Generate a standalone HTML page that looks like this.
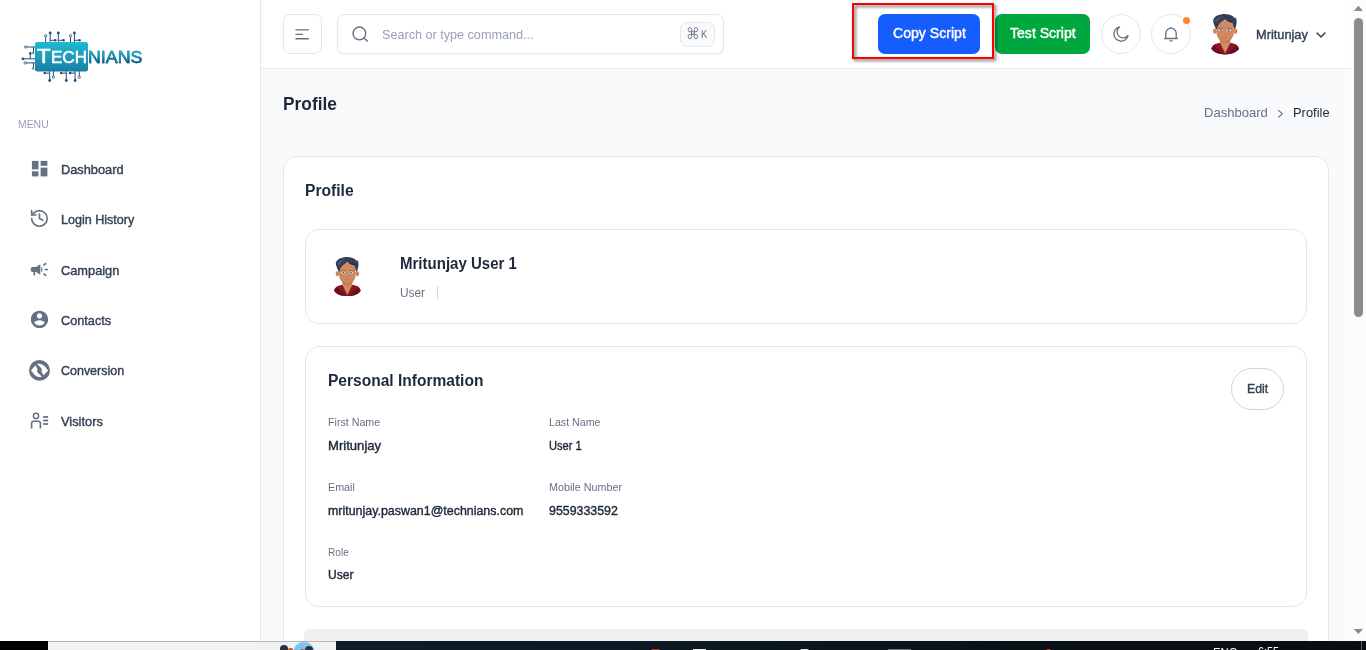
<!DOCTYPE html>
<html lang="en">
<head>
<meta charset="utf-8">
<title>Profile</title>
<style>
*{box-sizing:border-box;margin:0;padding:0}
html,body{width:1366px;height:650px;overflow:hidden;background:#f9fafb;font-family:"Liberation Sans",sans-serif;color:#1d2939}
.abs{position:absolute}
.t{position:absolute;white-space:nowrap;line-height:1;transform-origin:0 0}
.bx{position:absolute;border:1px solid #e4e7ec;background:#fff}
svg{position:absolute;overflow:visible}
</style>
</head>
<body>
<!-- SIDEBAR -->
<div class="abs" style="left:0;top:0;width:261px;height:641px;background:#fff;border-right:1px solid #e4e7ec"></div>
<svg style="left:0;top:0" width="150" height="90" viewBox="0 0 150 90">
<defs>
<linearGradient id="lg1" x1="0" y1="0" x2="0" y2="1"><stop offset="0" stop-color="#1fbad2"/><stop offset="1" stop-color="#1a7da6"/></linearGradient>
</defs>
<g stroke="#1f4f76" stroke-width="1" fill="none">
<path d="M45.7 36.5V42M50.2 32.9V42M50.2 40.3H55.2M58.3 32.9V42M58.3 40.3H63.5M70.5 36.5V42M74.4 32.9V42M74.4 40.3H79.5"/>
<path d="M26.5 47H35M33.5 47V52.3M30.3 53.4V58.8M22.9 58.8H35M26 62.9H35M33.5 62.9V67.7"/>
<path d="M44.6 73.1H49.7M49.7 71V80.5M53.4 71V76.4M61.2 73.1H66.3M66.3 71V80.5M70 73.1H75.1M75.1 71V80.5M79.3 71V76.4"/>
</g>
<g fill="#1f4f76">
<circle cx="50.2" cy="32.9" r="1.4"/><circle cx="58.3" cy="32.9" r="1.4"/><circle cx="74.4" cy="32.9" r="1.4"/>
<circle cx="55.2" cy="40.3" r="1.3"/><circle cx="63.5" cy="40.3" r="1.3"/><circle cx="79.5" cy="40.3" r="1.3"/>
<circle cx="30.3" cy="53.4" r="1.3"/><circle cx="22.9" cy="58.8" r="1.4"/>
<circle cx="44.6" cy="73.1" r="1.25"/><circle cx="61.2" cy="73.1" r="1.25"/><circle cx="70" cy="73.1" r="1.25"/>
<circle cx="49.7" cy="80.5" r="1.4"/><circle cx="66.3" cy="80.5" r="1.4"/><circle cx="75.1" cy="80.5" r="1.4"/>
</g>
<g fill="#fff" stroke="#1f4f76" stroke-width="0.8">
<circle cx="45.7" cy="35.7" r="1.15"/><circle cx="70.5" cy="35.7" r="1.15"/>
<circle cx="25.7" cy="47" r="1.15"/><circle cx="25.2" cy="62.9" r="1.2"/><circle cx="33.3" cy="53" r="0.8"/><circle cx="33.1" cy="68.5" r="0.9"/>
<circle cx="53.4" cy="77.2" r="1.15"/><circle cx="79.3" cy="77.2" r="1.15"/>
</g>
<rect x="35" y="42" width="53" height="29.5" rx="2.2" fill="url(#lg1)"/>
</svg>
<div class="t" style="left:37.2px;top:46px;font-size:20.2px;color:#fff;transform:scaleX(1.1);-webkit-text-stroke:0.55px #fff">T</div>
<div class="t" style="left:51.3px;top:49.6px;font-size:15.7px;color:#fff;transform:scaleX(1.085);-webkit-text-stroke:0.55px #fff">ECH</div>
<div class="t" style="left:87.7px;top:49.6px;font-size:15.7px;transform:scaleX(1.135);background:linear-gradient(180deg,#20b8d2 25%,#0e4a78 80%);-webkit-background-clip:text;background-clip:text;color:transparent;-webkit-text-stroke:0.5px #1a7fa6">NIANS</div>

<svg style="left:0;top:150px" width="60" height="290" viewBox="0 150 60 290">
<g fill="#667085">
<!-- dashboard -->
<rect x="31.9" y="160.9" width="6.6" height="8.5"/><rect x="40.6" y="160.9" width="6.8" height="4.9"/><rect x="31.9" y="171.3" width="6.6" height="5.1"/><rect x="40.6" y="167.6" width="6.8" height="8.8"/>
<!-- campaign (material) -->
<g transform="translate(29.1 259.15) scale(0.8625)"><path d="M18 11v2h4v-2h-4zm-2 6.61c.96.71 2.21 1.65 3.2 2.39.4-.53.8-1.07 1.2-1.6-.99-.74-2.24-1.68-3.2-2.4-.4.54-.8 1.08-1.2 1.61zM20.400 5.600c-.4-.53-.8-1.07-1.2-1.6-.99.74-2.24 1.68-3.2 2.4.4.53.8 1.07 1.2 1.6.96-.72 2.21-1.65 3.200-2.400zM4 9c-1.1 0-2 .9-2 2v2c0 1.1.9 2 2 2h1v4h2v-4h1l5 3V6L8 9H4zm11.500 3c0-1.330-.58-2.530-1.500-3.350v6.690c.92-.81 1.500-2.010 1.500-3.340z"/></g>
<!-- account circle (material) -->
<g transform="translate(29.15 309.05) scale(0.8625)"><path d="M12 2C6.480 2 2 6.480 2 12s4.480 10 10 10 10-4.480 10-10S17.520 2 12 2zm0 3c1.660 0 3 1.340 3 3s-1.340 3-3 3-3-1.340-3-3 1.340-3 3-3zm0 14.200c-2.500 0-4.710-1.280-6-3.220.03-1.990 4-3.080 6-3.080 1.990 0 5.970 1.090 6 3.080-1.290 1.940-3.500 3.220-6 3.220z"/></g>
<!-- conversion -->
<circle cx="39.5" cy="370.4" r="10.45"/>
<g transform="translate(39.5 370.4)" fill="#fff">
<path id="cres" d="M-8.6 0L-4.2 -4.8C-3.6 -4.4 -3.1 -3.6 -2.7 -2.6C-2.4 -1.9 -2.1 -1.3 -1.8 -0.9C-2.5 -0.2 -2.7 0.5 -2.3 1.2C-1.9 2 -1.5 2.6 -0.9 3.2C-0.1 4 0.6 4.6 1.2 5.1C1.600 5.5 2 5.8 2.4 6.1C1.3 6.6 0 6.7 -1 6.500C-2.4 6.2 -3.7 5.500 -4.8 4.5C-5.6 3.8 -6.3 3 -6.8 2.2Z"/>
<use href="#cres" transform="rotate(180)"/>
</g>
<!-- visitors bars -->
<rect x="43.1" y="416.1" width="5" height="1.8"/><rect x="43.1" y="419.6" width="5" height="1.8"/><rect x="43.1" y="423.1" width="5" height="1.8"/>
</g>
<g fill="none" stroke="#667085">
<!-- history (lucide) -->
<g transform="translate(29.1 208.1) scale(0.8625)" stroke-width="1.9" stroke-linecap="round" stroke-linejoin="round"><path d="M3 12a9 9 0 1 0 9-9 9.75 9.750 0 0 0-6.740 2.740L3 8"/><path d="M3 3v5h5"/><path d="M12 7v5l4 2"/></g>
<!-- visitors person -->
<circle cx="36" cy="415.9" r="2.6" stroke-width="1.5"/>
<path d="M31.6 428.6V423.2a2 2 0 0 1 2-2h4.800a2 2 0 0 1 2 2V428.6" stroke-width="1.6"/>
</g>
</svg>


<!-- HEADER -->
<div class="abs" style="left:261px;top:0;width:1090px;height:69px;background:#fff;border-bottom:1px solid #e4e7ec"></div>
<div class="bx" style="left:283px;top:14px;width:39px;height:40px;border-radius:7px"></div>
<div class="bx" style="left:337px;top:14px;width:387px;height:40px;border-radius:7px;box-shadow:0 1px 2px rgba(16,24,40,.05)"></div>
<div class="bx" style="left:680px;top:22px;width:35px;height:24.5px;background:#f9fafb;border-radius:7px"></div>

<div class="abs" style="left:878px;top:14px;width:102px;height:40px;border-radius:7px;background:#155dfc"></div>
<div class="abs" style="left:995px;top:14px;width:95px;height:40px;border-radius:7px;background:#00a63e"></div>

<div class="abs" style="left:852px;top:3px;width:142px;height:56px;border:2px solid #ff0000;filter:drop-shadow(2px 2px 1.5px rgba(0,0,0,.55))"></div>
<div class="bx" style="left:1101px;top:14px;width:40px;height:40px;border-radius:50%"></div>
<div class="bx" style="left:1151px;top:14px;width:40px;height:40px;border-radius:50%"></div>
<div class="abs" style="left:1183px;top:17px;width:7.2px;height:7.2px;border-radius:50%;background:#fd853a"></div>
<svg style="left:1203px;top:10px" width="44" height="48" viewBox="0 0 596 650">
<defs><g id="avatar">
<path d="M113 522C122 495 140 474 165 462L228 443L300 470L372 443L435 462C460 474 478 495 487 522C462 575 380 602 300 602C220 602 138 575 113 522Z" fill="#8a1628"/>
<path d="M150 478C180 500 222 545 262 578L300 602L338 578C378 545 420 500 450 478C468 495 480 510 487 522C462 575 380 602 300 602C220 602 138 575 113 522C120 510 132 495 150 478Z" fill="#6d0e1f"/>
<path d="M232 400L368 400L368 448L300 585L232 448Z" fill="#d38d63"/>
<path d="M232 402L368 402L368 428C340 456 260 456 232 428Z" fill="#b5704a"/>
<ellipse cx="160" cy="287" rx="25" ry="35" fill="#cf875c"/>
<ellipse cx="440" cy="287" rx="25" ry="35" fill="#cf875c"/>
<path d="M182 190C182 120 418 120 418 190L417 300C412 372 358 442 300 442C242 442 188 372 183 300Z" fill="#cf8a61"/>
<path d="M300 442C242 442 188 372 183 300L183 282C202 352 252 416 300 419C348 416 398 352 417 282L417 300C412 372 358 442 300 442Z" fill="#c07a52" opacity=".55"/>
<path d="M182 268C165 238 150 200 138 160C132 125 150 100 185 78C225 62 262 55 292 55C340 56 385 68 410 88L420 104L444 104C458 128 460 170 448 215L432 264L416 232C412 200 402 178 390 167C370 172 340 152 302 128C268 140 228 170 206 206Z" fill="#363c52"/>
<path d="M148 150C170 108 235 82 298 82C258 96 214 128 190 176Z" fill="#474e68"/>
<path d="M302 128C340 152 370 172 390 167L396 150C362 150 330 135 302 128Z" fill="#262b3d"/>
<path d="M205 246L270 240L272 250L207 258Z" fill="#7b5233"/>
<path d="M325 240L392 246L390 258L323 250Z" fill="#7b5233"/>
<ellipse cx="240" cy="270" rx="27" ry="15" fill="#f3f3f3"/>
<ellipse cx="352" cy="270" rx="27" ry="15" fill="#f3f3f3"/>
<circle cx="243" cy="270" r="13" fill="#3e6d9c"/><circle cx="243" cy="270" r="6" fill="#1d2c44"/>
<circle cx="349" cy="270" r="13" fill="#3e6d9c"/><circle cx="349" cy="270" r="6" fill="#1d2c44"/>
<ellipse cx="298" cy="328" rx="24" ry="10" fill="#e27b4c"/>
<path d="M264 372L334 372" stroke="#a8694a" stroke-width="6" fill="none"/>
</g></defs>
<use href="#avatar"/>
</svg>

<svg style="left:0;top:0" width="1366" height="70" viewBox="0 0 1366 70" fill="none" stroke="#667085" stroke-width="1.4">
<path d="M295.5 29.9H308.9M295.5 34.35H302.8M295.5 38.8H308.9"/>
<circle cx="359.4" cy="33.4" r="6.35"/><path d="M363.9 37.9L367.3 41.1" stroke-linecap="round"/>
<path d="M1119.6 26.95A7.15 7.15 0 1 0 1128.05 35.4A6.05 6.05 0 1 1 1119.6 26.95Z" stroke-linejoin="round" stroke-width="1.3"/>
<path d="M1164.2 38.5H1177.8M1165.8 38.5V33.4a5.2 5.2 0 0 1 10.4 0V38.5M1171 27V28.2M1169.4 40.9H1172.6" stroke-width="1.3"/>
<path d="M1316.6 32.6L1321 36.8L1325.4 32.6" stroke-width="1.6" stroke="#475467"/>
<path d="M1278.4 110.1L1282.2 113.8L1278.4 117.5" stroke-width="1.1"/>
<path transform="translate(687.7 27.1)" stroke-width="0.9" d="M3.85 4.65V2.55A1.7 2.1 0 1 0 2.15 4.65H8.25A1.7 2.1 0 1 0 6.55 2.55V9.45A1.7 2.1 0 1 0 8.25 7.35H2.150A1.7 2.1 0 1 0 3.85 9.45Z"/>
</svg>


<!-- MAIN -->
<div class="bx" style="left:283px;top:156px;width:1046px;height:600px;border-radius:14px"></div>
<div class="bx" style="left:305px;top:229px;width:1002px;height:95px;border-radius:14px"></div>
<svg style="left:326.3px;top:253px" width="42.5" height="46.7" viewBox="0 0 596 650"><use href="#avatar"/></svg>

<div class="abs" style="left:437px;top:286px;width:1px;height:13px;background:#d0d5dd"></div>
<div class="bx" style="left:305px;top:346px;width:1002px;height:261px;border-radius:14px"></div>
<div class="bx" style="left:1231px;top:368px;width:53px;height:42px;border-radius:21px;border-color:#d0d5dd"></div>
<div class="abs" style="left:304px;top:629px;width:1004px;height:40px;background:#f0f0f0;border-radius:5px"></div>

<!-- TEXT -->
<div class="t" id="t-menu" style="left:17.58px;top:119px;font-size:10.8px;color:#98a2b3;transform:scaleX(0.9644)">MENU</div>
<div class="t" id="t-m1" style="left:61.47px;top:164px;font-size:12.8px;color:#344054;transform:scaleX(0.9994);-webkit-text-stroke:0.4px #344054">Dashboard</div>
<div class="t" id="t-m2" style="left:61.48px;top:214px;font-size:12.8px;color:#344054;transform:scaleX(0.9813);-webkit-text-stroke:0.4px #344054">Login History</div>
<div class="t" id="t-m3" style="left:61.40px;top:265px;font-size:12.8px;color:#344054;transform:scaleX(0.9999);-webkit-text-stroke:0.4px #344054">Campaign</div>
<div class="t" id="t-m4" style="left:61.41px;top:315px;font-size:12.8px;color:#344054;transform:scaleX(0.9924);-webkit-text-stroke:0.4px #344054">Contacts</div>
<div class="t" id="t-m5" style="left:61.41px;top:365px;font-size:12.8px;color:#344054;transform:scaleX(0.9747);-webkit-text-stroke:0.4px #344054">Conversion</div>
<div class="t" id="t-m6" style="left:61.29px;top:416px;font-size:12.8px;color:#344054;transform:scaleX(1.0027);-webkit-text-stroke:0.4px #344054">Visitors</div>
<div class="t" id="t-search" style="left:381.65px;top:29px;font-size:12.8px;color:#98a2b3;transform:scaleX(0.9859)">Search or type command...</div>
<div class="t" id="t-k" style="left:700.80px;top:29px;font-size:10.8px;color:#667085;transform:scaleX(0.8746)">K</div>
<div class="t" id="t-copy" style="left:892.72px;top:26px;font-size:14.4px;color:#ffffff;transform:scaleX(0.9795);-webkit-text-stroke:0.4px #ffffff">Copy Script</div>
<div class="t" id="t-test" style="left:1009.78px;top:26px;font-size:14.4px;color:#ffffff;transform:scaleX(0.9774);-webkit-text-stroke:0.4px #ffffff">Test Script</div>
<div class="t" id="t-hname" style="left:1256.27px;top:29px;font-size:12.8px;color:#344054;transform:scaleX(0.9989);-webkit-text-stroke:0.4px #344054">Mritunjay</div>
<div class="t" id="t-title" style="left:282.94px;top:95px;font-size:18.4px;color:#1d2939;transform:scaleX(0.9427);font-weight:700">Profile</div>
<div class="t" id="t-bc1" style="left:1204.06px;top:107px;font-size:12.8px;color:#667085;transform:scaleX(1.0183)">Dashboard</div>
<div class="t" id="t-bc2" style="left:1293.07px;top:107px;font-size:12.8px;color:#1d2939;transform:scaleX(1.0082)">Profile</div>
<div class="t" id="t-h1" style="left:305.47px;top:183px;font-size:16.0px;color:#1d2939;transform:scaleX(0.9769);font-weight:700">Profile</div>
<div class="t" id="t-h2" style="left:399.90px;top:256px;font-size:16.0px;color:#1d2939;transform:scaleX(0.9389);font-weight:700">Mritunjay User 1</div>
<div class="t" id="t-sub" style="left:399.90px;top:287px;font-size:12.8px;color:#667085;transform:scaleX(0.9271)">User</div>
<div class="t" id="t-h3" style="left:328.05px;top:373px;font-size:16.0px;color:#1d2939;transform:scaleX(0.9711);font-weight:700">Personal Information</div>
<div class="t" id="t-edit" style="left:1247.10px;top:383px;font-size:12.8px;color:#344054;transform:scaleX(0.9602);-webkit-text-stroke:0.4px #344054">Edit</div>
<div class="t" id="t-l1" style="left:328.44px;top:417px;font-size:11px;color:#667085;transform:scaleX(0.9704)">First Name</div>
<div class="t" id="t-v1" style="left:328.44px;top:440px;font-size:12.8px;color:#1d2939;transform:scaleX(1.0240);-webkit-text-stroke:0.4px #1d2939">Mritunjay</div>
<div class="t" id="t-l2" style="left:548.64px;top:417px;font-size:11px;color:#667085;transform:scaleX(0.9690)">Last Name</div>
<div class="t" id="t-v2" style="left:548.94px;top:440px;font-size:12.8px;color:#1d2939;transform:scaleX(0.8682);-webkit-text-stroke:0.4px #1d2939">User 1</div>
<div class="t" id="t-l3" style="left:328.46px;top:482px;font-size:11px;color:#667085;transform:scaleX(0.9729)">Email</div>
<div class="t" id="t-v3" style="left:327.95px;top:505px;font-size:12.8px;color:#1d2939;transform:scaleX(0.9711);-webkit-text-stroke:0.4px #1d2939">mritunjay.paswan1@technians.com</div>
<div class="t" id="t-l4" style="left:548.63px;top:482px;font-size:11px;color:#667085;transform:scaleX(0.9786)">Mobile Number</div>
<div class="t" id="t-v4" style="left:549.11px;top:505px;font-size:12.8px;color:#1d2939;transform:scaleX(0.9680);-webkit-text-stroke:0.4px #1d2939">9559333592</div>
<div class="t" id="t-l5" style="left:327.72px;top:547px;font-size:11px;color:#667085;transform:scaleX(0.9174)">Role</div>
<div class="t" id="t-v5" style="left:327.83px;top:569px;font-size:12.8px;color:#1d2939;transform:scaleX(0.9420);-webkit-text-stroke:0.4px #1d2939">User</div>

<!-- SCROLLBAR -->
<div class="abs" style="left:1351px;top:0;width:15px;height:641px;background:#fcfcfc"></div>
<div class="abs" style="left:1354px;top:17.8px;width:9px;height:299px;border-radius:4.5px;background:#8b8b8b"></div>
<svg style="left:1351px;top:0" width="15" height="641" viewBox="0 0 15 641"><path d="M7.4 5.8L12 10.9H2.8Z M7.4 634.1L12 628.9H2.8Z" fill="#8b8b8b"/></svg>

<!-- TASKBAR -->
<div class="abs" style="left:0;top:641px;width:1366px;height:9px;overflow:hidden;background:linear-gradient(90deg,#0c1e27 0,#0b1b23 45%,#0a1217 70%,#090d10 100%)">
<div class="abs" style="left:0;top:0;width:48px;height:9px;background:#000"></div>
<div class="abs" style="left:48px;top:0;width:288px;height:9px;background:#f2f2f2;border-top:1px solid #b4b4b4"></div>
<div class="abs" style="left:293.3px;top:1.4px;width:22px;height:22px;border-radius:50%;background:#7cc4f4"></div>
<div class="abs" style="left:304.9px;top:4.9px;width:8px;height:8px;border-radius:50%;background:#2b323b"></div>
<div class="abs" style="left:279.6px;top:4.2px;width:8px;height:8px;border-radius:50%;background:#2b323b"></div>
<div class="abs" style="left:288px;top:7.2px;width:5px;height:3px;border-radius:2px;background:#c8602a"></div>
<div class="abs" style="left:300px;top:7.5px;width:5px;height:3px;border-radius:2px;background:#c8602a"></div>
<div class="abs" style="left:406px;top:8.5px;width:10px;height:3px;border-radius:2px;background:#2cc7d6"></div>
<div class="abs" style="left:651px;top:8px;width:9px;height:4px;border-radius:3px;background:#d92a2a"></div>
<div class="abs" style="left:693px;top:8px;width:13px;height:3px;background:#e8e8e8"></div>
<div class="abs" style="left:800px;top:8px;width:9px;height:4px;border-radius:3px;background:#dcdcdc"></div>
<div class="abs" style="left:888px;top:8.3px;width:23px;height:3px;background:#6c7276"></div>
<div class="abs" style="left:1046px;top:8px;width:5px;height:4px;border-radius:3px;background:#d92a2a"></div>
<div class="abs" style="left:1361px;top:0;width:1px;height:9px;background:#5a6266"></div>
<div class="t" style="left:1212.5px;top:5.6px;font-size:12px;color:#fff;transform:scaleX(.94)">ENG</div>
<div class="t" style="left:1258px;top:4.8px;font-size:12px;color:#fff;transform:scaleX(.9)">6:55</div>
</div>
</body>
</html>
